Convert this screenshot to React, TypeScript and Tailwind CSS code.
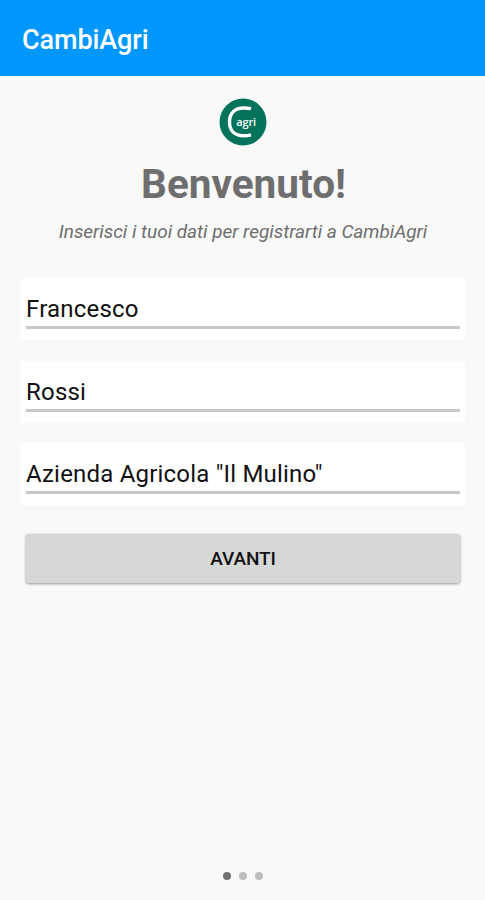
const fields = ["Francesco", "Rossi", 'Azienda Agricola "Il Mulino"'];

function Logo() {
  return (
    <svg className="h-12 w-12" viewBox="0 0 48 48">
      <circle cx="24" cy="24" r="23.5" fill="#04735c" />
      <path
        d="M32 10.700C29.500 10.100 27 10 24.500 10C15.500 10 10.500 15.500 10.500 24C10.500 32.500 15.500 37.700 24.500 37.700C27 37.700 29.500 37.500 32 36.800"
        fill="none"
        stroke="#fff"
        strokeWidth="3.400"
      />
      <text
        x="17.300"
        y="27.700"
        fill="#fff"
        fontSize="11"
        fontWeight="600"
        textLength="19.700"
        fontFamily="Open Sans, sans-serif"
      >
        agri
      </text>
    </svg>
  );
}

export default function App() {
  return (
    <div className="flex h-screen flex-col bg-[#f9f9f9] font-['Roboto',sans-serif]">
      <header className="flex h-[76px] shrink-0 items-center bg-[#0097ff] px-[22px] pt-1">
        <h1 className="text-[27px] font-medium tracking-[-0.1px] text-white">CambiAgri</h1>
      </header>
      <main className="flex flex-1 flex-col items-center px-5 pt-[22px]">
        <Logo />
        <h2 className="mt-[14px] ml-[2px] text-[40.5px] leading-[48px] font-bold text-[#6e6e6e]">Benvenuto!</h2>
        <p className="mt-3 ml-px text-[19px] leading-6 tracking-[-0.03px] whitespace-nowrap text-[#6e6e6e] italic">
          Inserisci i tuoi dati per registrarti a CambiAgri
        </p>
        <form className="mt-[34px] flex w-full flex-col gap-[20.5px]">
          {fields.map((value) => (
            <div key={value} className="h-[62px] rounded-[3px] bg-white pt-[13px] pr-[5px] pl-1.5">
              <div className="h-[38px] border-b-[3px] border-[#c8c8c8] text-[24px] leading-[36px] tracking-[0.2px] text-[#111]">
                {value}
              </div>
            </div>
          ))}
        </form>
        <div className="w-full pt-[29px] pr-[5px] pl-1.5">
          <button
            type="button"
            className="h-[49px] w-full rounded-[3px] bg-[#d6d8d7] pt-0.5 text-[19px] font-medium tracking-[-0.1px] text-[#111] shadow-[0_1px_3px_rgba(0,0,0,0.4)]"
          >
            AVANTI
          </button>
        </div>
        <div className="mt-auto mb-5 flex gap-2">
          <span className="h-2 w-2 rounded-full bg-[#707070]" />
          <span className="h-2 w-2 rounded-full bg-[#bdbdbd]" />
          <span className="h-2 w-2 rounded-full bg-[#bdbdbd]" />
        </div>
      </main>
    </div>
  );
}
